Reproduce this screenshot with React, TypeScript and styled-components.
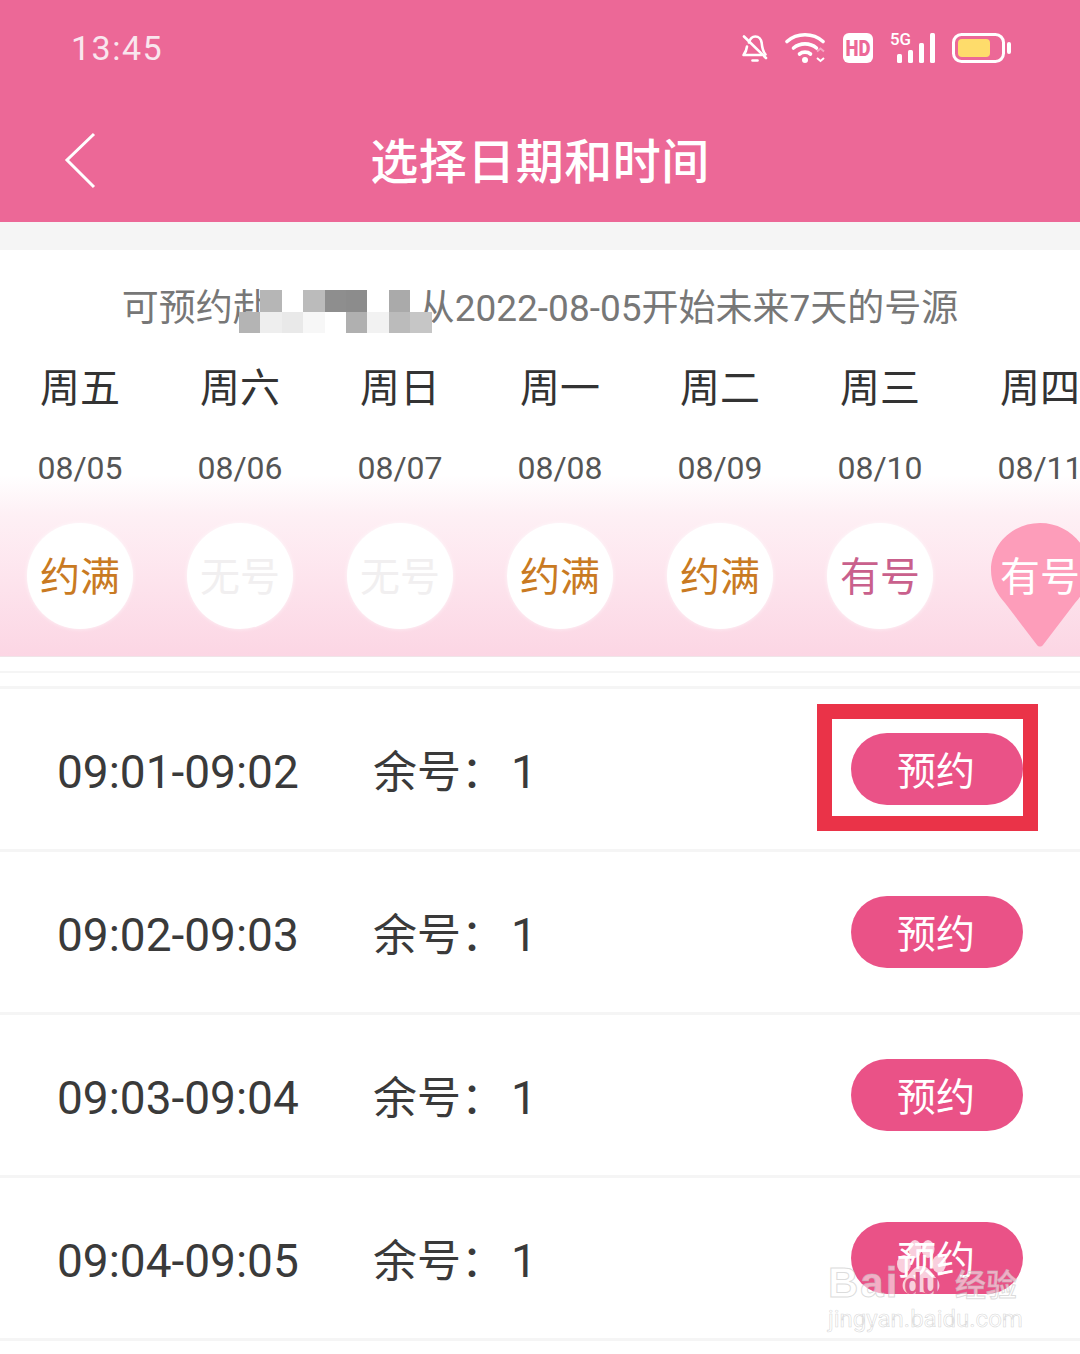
import React from "react";
import styled, { createGlobalStyle } from "styled-components";

const Global = createGlobalStyle`
  html, body { margin: 0; padding: 0; background: #fff; }
  body { font-family: Roboto, "Noto Sans CJK SC", sans-serif; }
`;

const Page = styled.div`
  position: relative;
  width: 1080px;
  height: 1354px;
  overflow: hidden;
  background: #fff;
`;

const Header = styled.header`
  height: 222px;
  background: #ec6897;
  color: #fff;
  display: flex;
  flex-direction: column;
`;

const StatusBar = styled.div`
  height: 96px;
  display: flex;
  align-items: center;
  justify-content: space-between;
  padding: 0 68px 0 71px;
`;

const Clock = styled.span`
  font-size: 34px;
  font-weight: 400;
  letter-spacing: 1.5px;
  color: #f9e6ee;
`;

const StatusIcons = styled.div`
  display: flex;
  align-items: center;
`;

const NavBar = styled.div`
  position: relative;
  height: 126px;
  display: flex;
  align-items: center;
  justify-content: center;
`;

const Back = styled.svg`
  position: absolute;
  left: 64px;
  top: 36px;
`;

const Title = styled.h1`
  margin: 0;
  font-size: 48px;
  font-weight: 500;
  line-height: 1;
  letter-spacing: 0.5px;
  position: relative;
  top: 4px;
`;

const Band = styled.div`
  height: 28px;
  background: #f5f5f5;
`;

const Notice = styled.div`
  position: relative;
  height: 75px;
  padding-top: 31px;
  box-sizing: border-box;
  text-align: center;
  font-size: 37px;
  line-height: 56px;
  color: #777;
  white-space: nowrap;
`;

const Redacted = styled.span`
  visibility: hidden;
`;

const Mosaic = styled.div`
  position: absolute;
  left: 239px;
  top: 40px;
  display: grid;
  grid-template-columns: repeat(9, 21.4px);
  grid-template-rows: 21.5px 21.5px;
`;

const Cell = styled.div<{ $c: string }>`
  background: ${(p) => p.$c};
`;

const Calendar = styled.section`
  height: 332px;
  padding-top: 33px;
  box-sizing: border-box;
  display: flex;
  overflow: hidden;
  background: linear-gradient(180deg, #fff 0, #fff 150px, #fef0f5 190px, #fcd6e4 331px);
  border-bottom: 1px solid #f0e4e8;
`;

const Day = styled.div`
  flex: 0 0 160px;
  display: flex;
  flex-direction: column;
  align-items: center;
`;

const Weekday = styled.div`
  height: 62px;
  font-size: 40px;
  line-height: 62px;
  color: #333;
  white-space: nowrap;
`;

const DateLabel = styled.div`
  margin-top: 25px;
  height: 46px;
  font-size: 32px;
  line-height: 46px;
  color: #555;
  white-space: nowrap;
`;

const Bubble = styled.div<{ $pin?: boolean }>`
  position: relative;
  margin-top: 32px;
  width: 106px;
  height: 106px;
  flex: none;
  border-radius: 50%;
  background: ${(p) => (p.$pin ? "transparent" : "#fff")};
  box-shadow: ${(p) => (p.$pin ? "none" : "0 0 4px rgba(255,255,255,0.7)")};
  display: flex;
  align-items: center;
  justify-content: center;
`;

const Pin = styled.svg`
  position: absolute;
  left: 0;
  top: 0;
`;

const BubbleText = styled.span<{ $c: string }>`
  position: relative;
  padding-top: 4px;
  font-size: 40px;
  line-height: 1;
  white-space: nowrap;
  color: ${(p) => p.$c};
`;

const Spacer = styled.div<{ $h: number; $line: number }>`
  height: ${(p) => p.$h}px;
  background: #fff;
  border-bottom: ${(p) => p.$line}px solid #f5f5f5;
`;

const Row = styled.div`
  height: 160px;
  box-sizing: content-box;
  display: flex;
  align-items: center;
  padding: 0 57px 0 57px;
  border-bottom: 3px solid #f5f5f5;
  color: #3a3a3a;
`;

const RowInner = styled.div`
  flex: 1;
  display: flex;
  align-items: center;
  height: 154px;
  margin-top: 6px;
`;

const Time = styled.span`
  width: 316px;
  font-size: 46px;
  white-space: nowrap;
`;

const Remain = styled.span`
  font-size: 44px;
  white-space: nowrap;
  flex: 1;
  display: flex;
  align-items: center;
`;

const RemainLabel = styled.span`
  width: 138px;
  margin-top: -6px;
`;

const RemainCount = styled.span`
  font-size: 46px;
`;

const Book = styled.button`
  width: 172px;
  height: 72px;
  margin: -6px 0 0 0;
  border: 0;
  padding: 6px 2px 0 0;
  box-sizing: border-box;
  border-radius: 36px;
  background: #ea5287;
  color: #fff;
  font-family: inherit;
  font-size: 39px;
  line-height: 66px;
`;

const Highlight = styled.div`
  position: absolute;
  left: 817px;
  top: 704px;
  width: 221px;
  height: 127px;
  box-sizing: border-box;
  border: 15px solid #ea3348;
`;

const Watermark = styled.div`
  position: absolute;
  left: 828px;
  top: 1262px;
  width: 200px;
  color: rgba(255, 255, 255, 0.55);
  -webkit-text-stroke: 1px rgba(190, 190, 190, 0.55);
`;

const MarkTop = styled.div`
  height: 40px;
  font-size: 42px;
  font-weight: 700;
  line-height: 42px;
  letter-spacing: 2px;
  font-family: "Liberation Sans", sans-serif;
`;

const MarkPaw = styled.svg`
  position: absolute;
  left: 67px;
  top: -24px;
`;

const MarkDu = styled.span`
  position: absolute;
  left: 76px;
  top: 7px;
  font-size: 29px;
  font-weight: 700;
  line-height: 30px;
  font-family: "Liberation Sans", sans-serif;
  color: #e2588a;
  -webkit-text-stroke: 0;
`;

const MarkCn = styled.span`
  position: absolute;
  left: 127px;
  top: 3px;
  font-size: 31px;
  line-height: 36px;
  font-weight: 500;
  white-space: nowrap;
  font-family: "Noto Sans CJK SC", sans-serif;
`;

const MarkBottom = styled.div`
  margin-top: 3px;
  font-size: 24px;
  line-height: 28px;
  white-space: nowrap;
  -webkit-text-stroke: 0.6px rgba(190, 190, 190, 0.6);
`;

const days = [
  { w: "周五", d: "08/05", s: "约满" },
  { w: "周六", d: "08/06", s: "无号" },
  { w: "周日", d: "08/07", s: "无号" },
  { w: "周一", d: "08/08", s: "约满" },
  { w: "周二", d: "08/09", s: "约满" },
  { w: "周三", d: "08/10", s: "有号" },
  { w: "周四", d: "08/11", s: "有号", pin: true },
];

const colorFor = (s: string, pin?: boolean) => {
  if (pin) return "#fff";
  if (s === "约满") return "#c97a22";
  if (s === "无号") return "#f1eff0";
  return "#c9608c";
};

const slots = ["09:01-09:02", "09:02-09:03", "09:03-09:04", "09:04-09:05"];

const mosaic = [
  "transparent", "#b6b6b6", "#fff", "#bbb", "#8e8e8e", "#8c8c8c", "#fff", "#aaa", "transparent",
  "#b4b4b4", "#eeeeee", "#e9e9e9", "#f7f7f7", "#fff", "#b0b0b0", "#f2f2f2", "#bbb", "#c6c6c6",
];

const BellOff = () => (
  <svg width="28" height="30" viewBox="0 0 28 30" fill="none" stroke="#fff" strokeWidth="2.6" strokeLinecap="round" strokeLinejoin="round">
    <path d="M8 9.5c1-3.500 3.300-6 6.300-6 3.500 0 6 3 6.400 6.500.4 4.500 1.300 8.500 3.800 11.500" />
    <path d="M6 13.500c-.4 3.500-1.500 6-3.500 8.500h18" />
    <path d="M3 3.500 25 25" />
    <path d="M11.500 27.500h5" />
  </svg>
);

const Wifi = () => (
  <svg width="44" height="32" viewBox="0 0 44 32" fill="none" style={{ marginLeft: 16 }}>
    <g stroke="#fff" strokeWidth="3.600" strokeLinecap="round">
      <path d="M2 9.500c10-9 26-9 36 0" />
      <path d="M8.500 16c6.500-5.500 16.500-5.500 23 0" />
      <path d="M14.500 22c3-2.500 8-2.500 11 0" />
    </g>
    <circle cx="20" cy="28" r="3" fill="#fff" />
    <path d="M32 19.500l3.500-3 3.500 3" stroke="#f6a8c4" strokeWidth="2" fill="none" />
    <path d="M32 26l3.500 3 3.500-3" stroke="#fff" strokeWidth="2" fill="none" />
  </svg>
);

const HdBadge = () => (
  <svg width="30" height="30" viewBox="0 0 30 30" style={{ marginLeft: 14 }}>
    <rect width="30" height="30" rx="6" fill="#fff" />
    <text x="15" y="23" textAnchor="middle" fontFamily="Roboto, sans-serif" fontWeight="900" fontSize="22" fill="#ec6897" textLength="25" lengthAdjust="spacingAndGlyphs">HD</text>
  </svg>
);

const Signal = () => (
  <svg width="46" height="32" viewBox="0 0 46 32" style={{ marginLeft: 17 }}>
    <text x="0" y="13" fontFamily="Roboto, sans-serif" fontSize="16" fontWeight="500" fill="#fff" textLength="21" lengthAdjust="spacingAndGlyphs">5G</text>
    <rect x="7" y="22" width="5" height="9" rx="1.500" fill="#fff" />
    <rect x="18" y="18" width="5" height="13" rx="1.500" fill="#fff" />
    <rect x="29" y="11" width="5" height="20" rx="1.500" fill="#fff" />
    <rect x="40" y="1" width="5" height="30" rx="1.500" fill="#fff" />
  </svg>
);

const Battery = () => (
  <svg width="60" height="30" viewBox="0 0 60 30" style={{ marginLeft: 16 }}>
    <rect x="1.500" y="1.500" width="50" height="27" rx="8" fill="none" stroke="#fff" strokeWidth="3" />
    <rect x="6" y="6" width="32" height="18" rx="4" fill="#fedc6b" />
    <rect x="55" y="9" width="4" height="12" rx="2" fill="#fff" />
  </svg>
);

export default function App() {
  return (
    <>
      <Global />
      <Page>
        <Header>
          <StatusBar>
            <Clock>13:45</Clock>
            <StatusIcons>
              <BellOff />
              <Wifi />
              <HdBadge />
              <Signal />
              <Battery />
            </StatusIcons>
          </StatusBar>
          <NavBar>
            <Back width="34" height="58" viewBox="0 0 34 58" fill="none" stroke="#fff" strokeWidth="3">
              <path d="M30 2 3 28l27 27" />
            </Back>
            <Title>选择日期和时间</Title>
          </NavBar>
        </Header>
        <Band />
        <Notice>
          可预约赴<Redacted>某某医院</Redacted>从2022-08-05开始未来7天的号源
          <Mosaic aria-hidden>
            {mosaic.map((c, i) => (
              <Cell key={i} $c={c} />
            ))}
          </Mosaic>
        </Notice>
        <Calendar>
          {days.map((d) => (
            <Day key={d.d}>
              <Weekday>{d.w}</Weekday>
              <DateLabel>{d.d}</DateLabel>
              <Bubble $pin={d.pin}>
                {d.pin && (
                  <Pin width="106" height="126" viewBox="0 0 106 126">
                    <path d="M53 0c27 0 49 21 49 47 0 14-6 24-14 33L56 122c-1.600 2-4.400 2-6 0L18 80C10 71 4 61 4 47 4 21 26 0 53 0z" fill="#fd9dba" />
                  </Pin>
                )}
                <BubbleText $c={colorFor(d.s, d.pin)}>{d.s}</BubbleText>
              </Bubble>
            </Day>
          ))}
        </Calendar>
        <Spacer $h={14} $line={2} />
        <Spacer $h={13} $line={3} />
        {slots.map((s) => (
          <Row key={s}>
            <RowInner>
              <Time>{s}</Time>
              <Remain>
                <RemainLabel>余号：</RemainLabel>
                <RemainCount>1</RemainCount>
              </Remain>
              <Book>预约</Book>
            </RowInner>
          </Row>
        ))}
        <Highlight />
        <Watermark>
          <MarkTop>Bai</MarkTop>
          <MarkPaw width="52" height="62" viewBox="0 0 52 62">
            <g fill="rgba(255,255,255,0.72)">
              <ellipse cx="9" cy="26" rx="7" ry="9" />
              <ellipse cx="20" cy="11" rx="6.500" ry="9" />
              <ellipse cx="33" cy="11" rx="6.500" ry="9" />
              <ellipse cx="44" cy="26" rx="7" ry="9" />
              <path d="M26 28c8 0 11 8 16 13 5 6 2 15-7 15-4 0-6-2-9-2s-5 2-9 2c-9 0-12-9-7-15 5-5 8-13 16-13z" />
            </g>
          </MarkPaw>
          <MarkDu>du</MarkDu>
          <MarkCn>经验</MarkCn>
          <MarkBottom>jingyan.baidu.com</MarkBottom>
        </Watermark>
      </Page>
    </>
  );
}
